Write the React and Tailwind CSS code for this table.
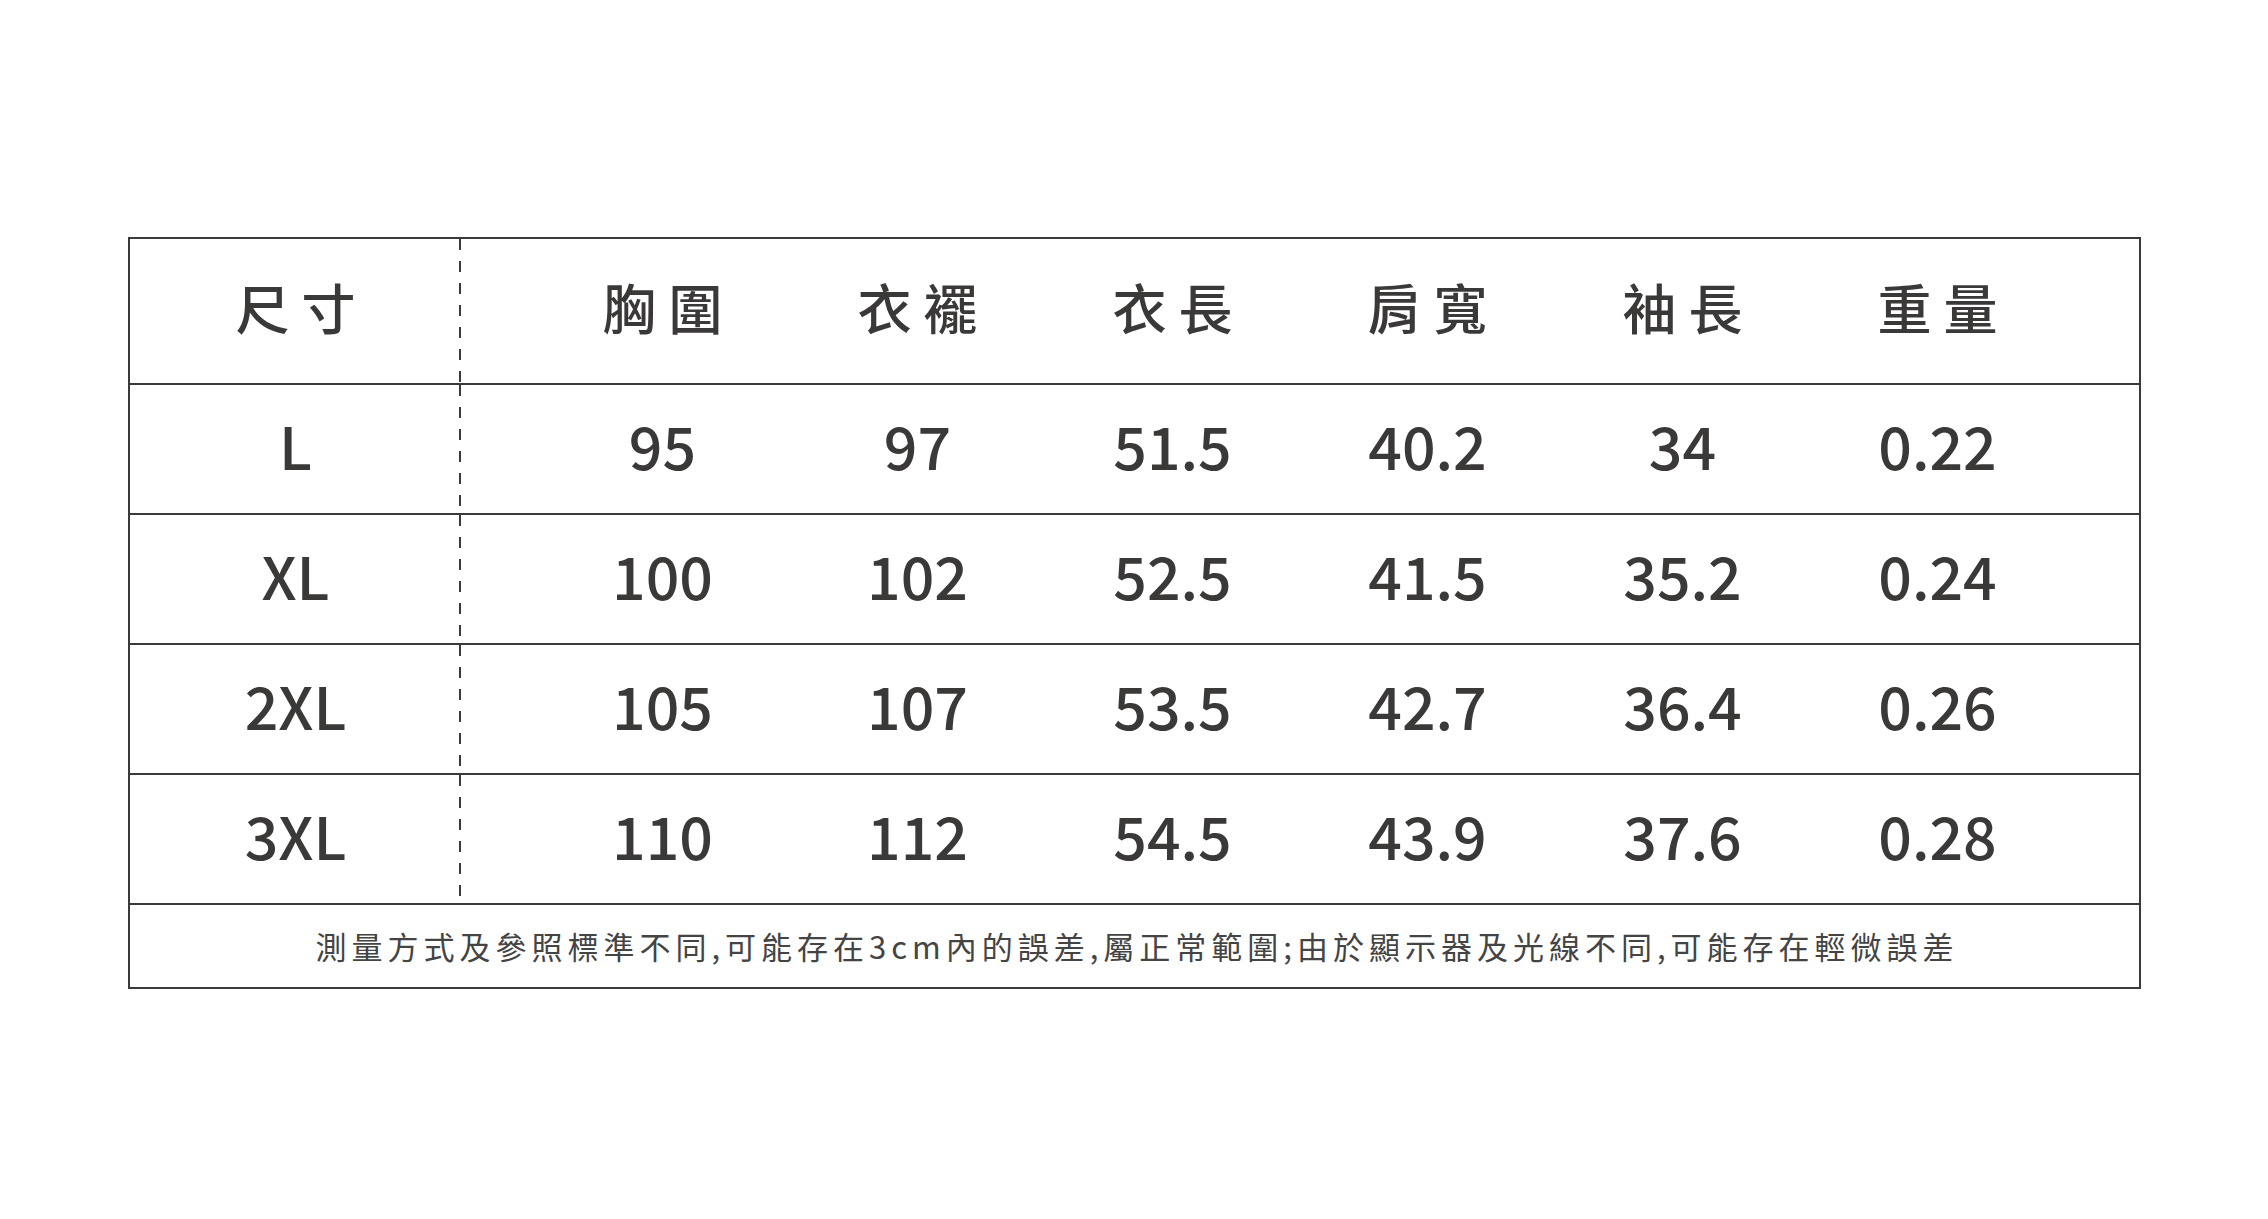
const headers = ['胸圍', '衣襬', '衣長', '肩寬', '袖長', '重量']

const rows = [
  ['L', '95', '97', '51.5', '40.2', '34', '0.22'],
  ['XL', '100', '102', '52.5', '41.5', '35.2', '0.24'],
  ['2XL', '105', '107', '53.5', '42.7', '36.4', '0.26'],
  ['3XL', '110', '112', '54.5', '43.9', '37.6', '0.28'],
]

// first column with the dashed divider on its right edge
function SizeCell({ children, className }) {
  return (
    <div
      className={
        'w-[331px] shrink-0 flex items-center justify-center bg-[linear-gradient(#3a3a3a_50%,transparent_50%)] bg-[length:2px_22px] bg-repeat-y bg-right-top ' +
        className
      }
    >
      {children}
    </div>
  )
}

export default function App() {
  return (
    <div
      className="min-h-screen bg-white pt-[237px] pl-[128px] text-[#3b3838]"
      style={{ fontFamily: '"Noto Sans CJK TC", "Noto Sans", sans-serif' }}
    >
      <div className="w-[2013px] border-2 border-[#3a3a3a]">
        {/* header */}
        <div className="flex h-[146px] border-b-2 border-[#3a3a3a]">
          <SizeCell className="text-[54px] font-medium tracking-[12px] pl-[12px] pb-[10px]">尺寸</SizeCell>
          <div className="flex pl-[74px]">
            {headers.map((h) => (
              <div
                key={h}
                className="w-[255px] flex items-center justify-center text-[54px] font-medium tracking-[12px] pl-[12px] pb-[10px]"
              >
                {h}
              </div>
            ))}
          </div>
        </div>

        {/* data rows */}
        {rows.map((r) => (
          <div key={r[0]} className="flex h-[130px] border-b-2 border-[#3a3a3a]">
            <SizeCell className="text-[59px] font-medium pb-[8px]">{r[0]}</SizeCell>
            <div className="flex pl-[74px]">
              {r.slice(1).map((v, i) => (
                <div key={i} className="w-[255px] flex items-center justify-center text-[59px] font-medium pb-[8px]">
                  {v}
                </div>
              ))}
            </div>
          </div>
        ))}

        {/* note */}
        <div className="h-[82px] flex items-center justify-center text-[31px] tracking-[5px] pl-[5px] text-[#444]">
          測量方式及參照標準不同,可能存在3cm內的誤差,屬正常範圍;由於顯示器及光線不同,可能存在輕微誤差
        </div>
      </div>
    </div>
  )
}
